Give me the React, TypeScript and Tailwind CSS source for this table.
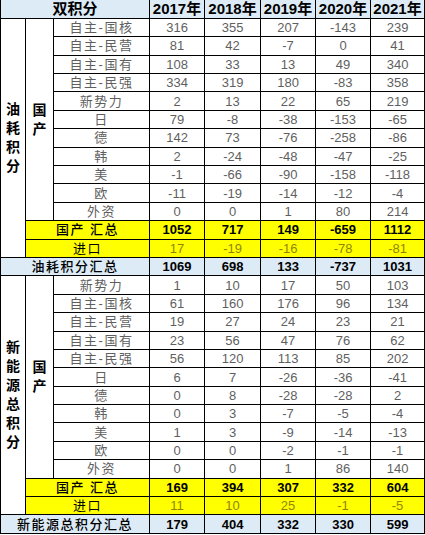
type Row = { label: string; values: number[] };

const oilRows: Row[] = [
  { label: "自主-国核", values: [316, 355, 207, -143, 239] },
  { label: "自主-民营", values: [81, 42, -7, 0, 41] },
  { label: "自主-国有", values: [108, 33, 13, 49, 340] },
  { label: "自主-民强", values: [334, 319, 180, -83, 358] },
  { label: "新势力", values: [2, 13, 22, 65, 219] },
  { label: "日", values: [79, -8, -38, -153, -65] },
  { label: "德", values: [142, 73, -76, -258, -86] },
  { label: "韩", values: [2, -24, -48, -47, -25] },
  { label: "美", values: [-1, -66, -90, -158, -118] },
  { label: "欧", values: [-11, -19, -14, -12, -4] },
  { label: "外资", values: [0, 0, 1, 80, 214] },
];

const nevRows: Row[] = [
  { label: "新势力", values: [1, 10, 17, 50, 103] },
  { label: "自主-国核", values: [61, 160, 176, 96, 134] },
  { label: "自主-民营", values: [19, 27, 24, 23, 21] },
  { label: "自主-国有", values: [23, 56, 47, 76, 62] },
  { label: "自主-民强", values: [56, 120, 113, 85, 202] },
  { label: "日", values: [6, 7, -26, -36, -41] },
  { label: "德", values: [0, 8, -28, -28, 2] },
  { label: "韩", values: [0, 3, -7, -5, -4] },
  { label: "美", values: [1, 3, -9, -14, -13] },
  { label: "欧", values: [0, 0, -2, -1, -1] },
  { label: "外资", values: [0, 0, 1, 86, 140] },
];

const years = ["2017年", "2018年", "2019年", "2020年", "2021年"];

const cell = "border border-black p-0 text-center align-middle";
const num = "text-[13px] text-[#5f5f5f]";

function Section({
  title,
  rows,
  domestic,
  imported,
  totalLabel,
  total,
}: {
  title: string;
  rows: Row[];
  domestic: number[];
  imported: number[];
  totalLabel: string;
  total: number[];
}) {
  return (
    <>
      {rows.map((r, i) => (
        <tr key={r.label} className="h-[18.4px]">
          {i === 0 && (
            <td rowSpan={rows.length + 2} className={`${cell} bg-white`}>
              <div className="flex flex-col items-center text-[14px] leading-[19px] font-bold text-black">
                {title.split("").map((c, k) => (
                  <span key={k}>{c}</span>
                ))}
              </div>
            </td>
          )}
          {i === 0 && (
            <td rowSpan={rows.length} className={`${cell} bg-white`}>
              <div className="flex flex-col items-center text-[14px] leading-[19px] font-bold text-black">
                <span>国</span>
                <span>产</span>
              </div>
            </td>
          )}
          <td className={`${cell} text-[13px] tracking-[1.5px] text-[#5f5f5f]`}>{r.label}</td>
          {r.values.map((v, k) => (
            <td key={k} className={`${cell} ${num}`}>
              {v}
            </td>
          ))}
        </tr>
      ))}
      <tr className="h-[18.4px] bg-[#ffff00]">
        <td colSpan={2} className={`${cell} text-[13px] tracking-[1.5px] font-medium text-black`}>
          国产 汇总
        </td>
        {domestic.map((v, k) => (
          <td key={k} className={`${cell} text-[13px] font-bold text-black`}>
            {v}
          </td>
        ))}
      </tr>
      <tr className="h-[18.4px] bg-[#ffff00]">
        <td colSpan={2} className={`${cell} text-[13px] tracking-[1.5px] text-black`}>
          进口
        </td>
        {imported.map((v, k) => (
          <td key={k} className={`${cell} text-[13px] text-[#8f8500]`}>
            {v}
          </td>
        ))}
      </tr>
      <tr className="h-[18.4px] bg-[#ddebf7]">
        <td colSpan={3} className={`${cell} text-[13px] tracking-[1.5px] font-medium text-black`}>
          {totalLabel}
        </td>
        {total.map((v, k) => (
          <td key={k} className={`${cell} text-[13px] font-bold text-black`}>
            {v}
          </td>
        ))}
      </tr>
    </>
  );
}

export default function App() {
  return (
    <div
      className="w-[425px] bg-white"
      style={{ fontFamily: '"Liberation Sans", "Noto Sans CJK SC", sans-serif' }}
    >
      <table className="w-[424px] table-fixed border-collapse leading-none">
        <colgroup>
          <col className="w-[25px]" />
          <col className="w-[28px]" />
          <col className="w-[96px]" />
          <col className="w-[55px]" />
          <col className="w-[56px]" />
          <col className="w-[55px]" />
          <col className="w-[55px]" />
          <col className="w-[54px]" />
        </colgroup>
        <tbody>
          <tr className="h-[18.4px] bg-[#ddebf7]">
            <td colSpan={3} className={`${cell} border-t-0 text-[15px] font-bold text-black`}>
              双积分
            </td>
            {years.map((y) => (
              <td key={y} className={`${cell} border-t-0 text-[15px] font-bold text-black`}>
                {y}
              </td>
            ))}
          </tr>
          <Section
            title="油耗积分"
            rows={oilRows}
            domestic={[1052, 717, 149, -659, 1112]}
            imported={[17, -19, -16, -78, -81]}
            totalLabel="油耗积分汇总"
            total={[1069, 698, 133, -737, 1031]}
          />
          <Section
            title="新能源总积分"
            rows={nevRows}
            domestic={[169, 394, 307, 332, 604]}
            imported={[11, 10, 25, -1, -5]}
            totalLabel="新能源总积分汇总"
            total={[179, 404, 332, 330, 599]}
          />
        </tbody>
      </table>
    </div>
  );
}
